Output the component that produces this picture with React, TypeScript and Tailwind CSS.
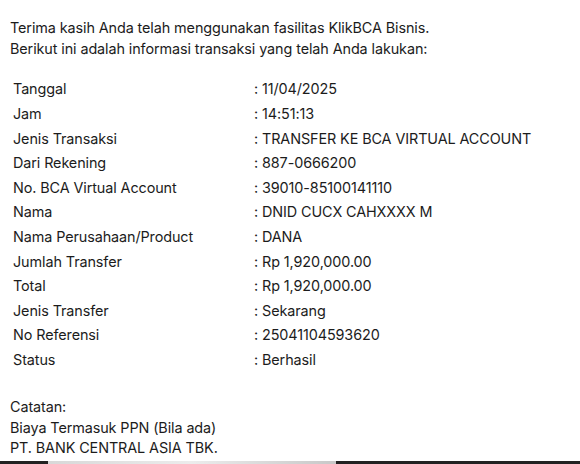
import React from "react";

const rows: [string, string][] = [
  ["Tanggal", "11/04/2025"],
  ["Jam", "14:51:13"],
  ["Jenis Transaksi", "TRANSFER KE BCA VIRTUAL ACCOUNT"],
  ["Dari Rekening", "887-0666200"],
  ["No. BCA Virtual Account", "39010-85100141110"],
  ["Nama", "DNID CUCX CAHXXXX M"],
  ["Nama Perusahaan/Product", "DANA"],
  ["Jumlah Transfer", "Rp 1,920,000.00"],
  ["Total", "Rp 1,920,000.00"],
  ["Jenis Transfer", "Sekarang"],
  ["No Referensi", "25041104593620"],
  ["Status", "Berhasil"],
];

export default function App() {
  return (
    <div
      className="w-[580px] h-[464px] bg-white text-[#1c1c1c] overflow-hidden flex flex-col"
      style={{ fontFamily: "Inter, 'Noto Sans', sans-serif" }}
    >
      <div className="flex-1 pl-[10px] pt-[17px] text-[14.4px] tracking-[-0.1px]">
        <div className="leading-[21px]">
          <div>Terima kasih Anda telah menggunakan fasilitas KlikBCA Bisnis.</div>
          <div>Berikut ini adalah informasi transaksi yang telah Anda lakukan:</div>
        </div>
        <div className="mt-[18px] pl-[3px] flex flex-col">
          {rows.map(([k, v]) => (
            <div key={k} className="flex h-[24.6px] items-center">
              <div className="w-[241px]">{k}</div>
              <div>: {v}</div>
            </div>
          ))}
        </div>
        <div className="mt-[25px] leading-[20.5px]">
          <div>Catatan:</div>
          <div>Biaya Termasuk PPN (Bila ada)</div>
          <div>PT. BANK CENTRAL ASIA TBK.</div>
        </div>
      </div>
      <div className="h-[3px] flex">
        <div className="w-[48px] bg-[#222222]" />
        <div className="w-[288px] bg-gradient-to-r from-[#d8d8d8] via-[#ececec] to-[#c8c8c8]" />
        <div className="flex-1 bg-[#222222]" />
      </div>
    </div>
  );
}
